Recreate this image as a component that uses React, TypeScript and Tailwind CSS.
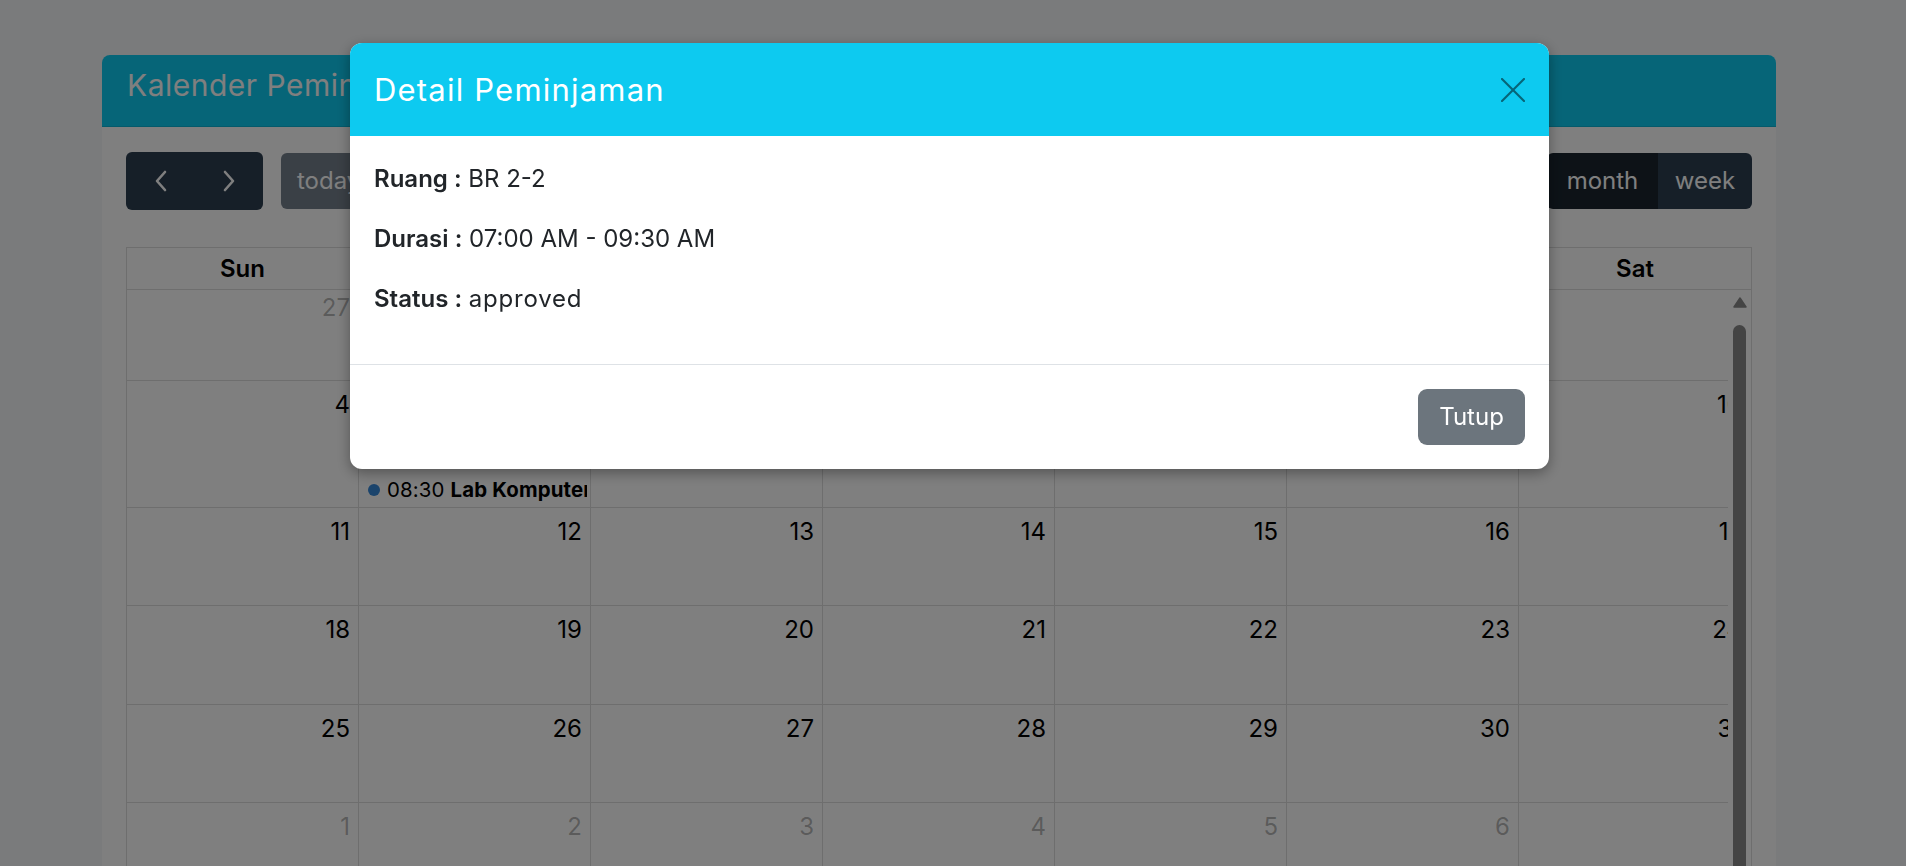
import React from 'react';

interface Day {
  d: number;
  other?: boolean;
}

interface Row {
  h: string;
  pt: string;
  days: Day[];
}

const rows: Row[] = [
  { h: 'h-[91px]', pt: 'pt-0', days: [{ d: 27, other: true }, { d: 28, other: true }, { d: 29, other: true }, { d: 30, other: true }, { d: 1 }, { d: 2 }, { d: 3 }] },
  { h: 'h-[127px]', pt: 'pt-[6px]', days: [{ d: 4 }, { d: 5 }, { d: 6 }, { d: 7 }, { d: 8 }, { d: 9 }, { d: 10 }] },
  { h: 'h-[98px]', pt: 'pt-[6px]', days: [{ d: 11 }, { d: 12 }, { d: 13 }, { d: 14 }, { d: 15 }, { d: 16 }, { d: 17 }] },
  { h: 'h-[99px]', pt: 'pt-[6px]', days: [{ d: 18 }, { d: 19 }, { d: 20 }, { d: 21 }, { d: 22 }, { d: 23 }, { d: 24 }] },
  { h: 'h-[98px]', pt: 'pt-[6px]', days: [{ d: 25 }, { d: 26 }, { d: 27 }, { d: 28 }, { d: 29 }, { d: 30 }, { d: 31 }] },
  { h: 'h-[120px]', pt: 'pt-[6px]', days: [{ d: 1, other: true }, { d: 2, other: true }, { d: 3, other: true }, { d: 4, other: true }, { d: 5, other: true }, { d: 6, other: true }, { d: 7, other: true }] },
];

const events: Record<number, { time: string; title: string }[]> = {
  5: [
    { time: '07:00', title: 'BR 2-2' },
    { time: '08:30', title: 'Lab Komputer' },
  ],
};

const weekdays = ['Sun', 'Mon', 'Tue', 'Wed', 'Thu', 'Fri', 'Sat'];

const Chevron = ({ dir }: { dir: 'left' | 'right' }) => (
  <svg width="16" height="22" viewBox="0 0 16 22" fill="none" stroke="currentColor" strokeWidth="2.6" strokeLinecap="round" strokeLinejoin="round">
    {dir === 'left' ? <polyline points="12,2 4,11 12,20" /> : <polyline points="4,2 12,11 4,20" />}
  </svg>
);

export default function App() {
  return (
    <div className="relative h-[866px] overflow-hidden bg-[#f4f6f9] font-['Inter','Liberation_Sans',sans-serif] text-[24px] text-[#212529]">
      {/* calendar card */}
      <div className="ml-[102px] mt-[55px] w-[1674px] rounded-t-[8px] bg-white">
        <div className="h-[72px] rounded-t-[8px] border-b border-black/10 bg-[#0dcaf0] px-[25px] pt-[12px]">
          <h3 className="text-[30px] leading-[36px] tracking-[0.5px] text-white">Kalender Peminjaman</h3>
        </div>

        <div className="px-[24px] pt-[25px]">
          {/* toolbar */}
          <div className="mb-[37px] flex h-[58px] items-center justify-between">
            <div className="flex items-center gap-[18px]">
              <div className="flex h-[58px] overflow-hidden rounded-[6px] bg-[#2c3e50] text-white">
                <button className="flex w-[69px] items-center justify-center">
                  <Chevron dir="left" />
                </button>
                <button className="flex w-[68px] items-center justify-center">
                  <Chevron dir="right" />
                </button>
              </div>
              <button className="h-[56px] rounded-[6px] bg-[#2c3e50] px-[16px] text-white opacity-65">today</button>
            </div>
            <h2 className="text-[33px] font-medium text-black">May 2025</h2>
            <div className="flex h-[56px] overflow-hidden rounded-[6px] text-white">
              <button className="w-[111px] bg-[#1a252f]">month</button>
              <button className="w-[94px] bg-[#2c3e50]">week</button>
            </div>
          </div>

          {/* month grid */}
          <div className="border-x border-[#ddd] text-black">
            <div className="grid h-[43px] grid-cols-7 border-y border-[#ddd]">
              {weekdays.map((w, i) => (
                <div key={w} className={`flex items-center justify-center font-semibold ${i < 6 ? 'border-r border-[#ddd]' : ''}`}>
                  {w}
                </div>
              ))}
            </div>
            <div className="flex">
              <div className="w-[1601px] overflow-hidden">
                <div className="w-[1624px]">
                  {rows.map((row, ri) => (
                    <div key={ri} className={`grid grid-cols-7 ${row.h}`}>
                      {row.days.map((day, di) => {
                        const evs = !day.other ? events[day.d] : undefined;
                        return (
                          <div key={di} className="flex flex-col overflow-hidden border-r border-b border-[#ddd]">
                            <div className={`pr-[8px] text-right leading-[36px] ${row.pt} ${day.other ? 'text-black/30' : 'text-black'}`}>
                              {day.d}
                            </div>
                            {evs && (
                              <div className="mt-auto flex flex-col">
                                {evs.map((ev) => (
                                  <div key={ev.time} className="mx-[3px] flex h-[34px] items-center overflow-hidden whitespace-nowrap text-[20.4px] tracking-[0.15px]">
                                    <span className="ml-[6px] mr-[7px] h-[12px] w-[12px] shrink-0 rounded-full bg-[#3788d8]" />
                                    <span className="mr-[6px]">{ev.time}</span>
                                    <span className="font-bold">{ev.title}</span>
                                  </div>
                                ))}
                              </div>
                            )}
                          </div>
                        );
                      })}
                    </div>
                  ))}
                </div>
              </div>
              {/* scrollbar */}
              <div className="flex flex-1 flex-col items-start pl-[5px] pt-[7px]">
                <svg width="14" height="11" viewBox="0 0 14 11">
                  <path d="M7 1 L13 10 L1 10 Z" fill="#888" stroke="#888" strokeWidth="1.5" strokeLinejoin="round" />
                </svg>
                <div className="mt-[17px] h-[600px] w-[13px] rounded-t-full bg-[#888]" />
              </div>
            </div>
          </div>
        </div>
      </div>

      {/* backdrop */}
      <div className="fixed inset-0 bg-black/50" />

      {/* modal */}
      <div className="fixed left-[350px] top-[43px] w-[1199px] overflow-hidden rounded-[12px] bg-white shadow-[0_4px_14px_rgba(0,0,0,0.35)]">
        <div className="flex h-[93px] items-center justify-between bg-[#0dcaf0] px-[24px]">
          <h5 className="text-[31px] leading-[45px] tracking-[1.2px] text-white">Detail Peminjaman</h5>
          <button className="text-[#066578]">
            <svg width="24" height="24" viewBox="0 0 24 24" stroke="currentColor" strokeWidth="2.2" strokeLinecap="round">
              <line x1="1" y1="1" x2="23" y2="23" />
              <line x1="23" y1="1" x2="1" y2="23" />
            </svg>
          </button>
        </div>
        <div className="px-[24px] pb-[23px] pt-[25px] leading-[36px]">
          <p className="mb-[24px]"><span className="font-semibold">Ruang :</span> BR 2-2</p>
          <p className="mb-[24px]"><span className="font-semibold">Durasi :</span> 07:00 AM - 09:30 AM</p>
          <p className="mb-[24px]"><span className="font-semibold">Status :</span> <span className="tracking-[0.8px]">approved</span></p>
        </div>
        <div className="flex justify-end border-t border-[#dee2e6] px-[24px] py-[24px]">
          <button className="h-[56px] w-[107px] rounded-[9px] bg-[#6c757d] text-white">Tutup</button>
        </div>
      </div>
    </div>
  );
}
